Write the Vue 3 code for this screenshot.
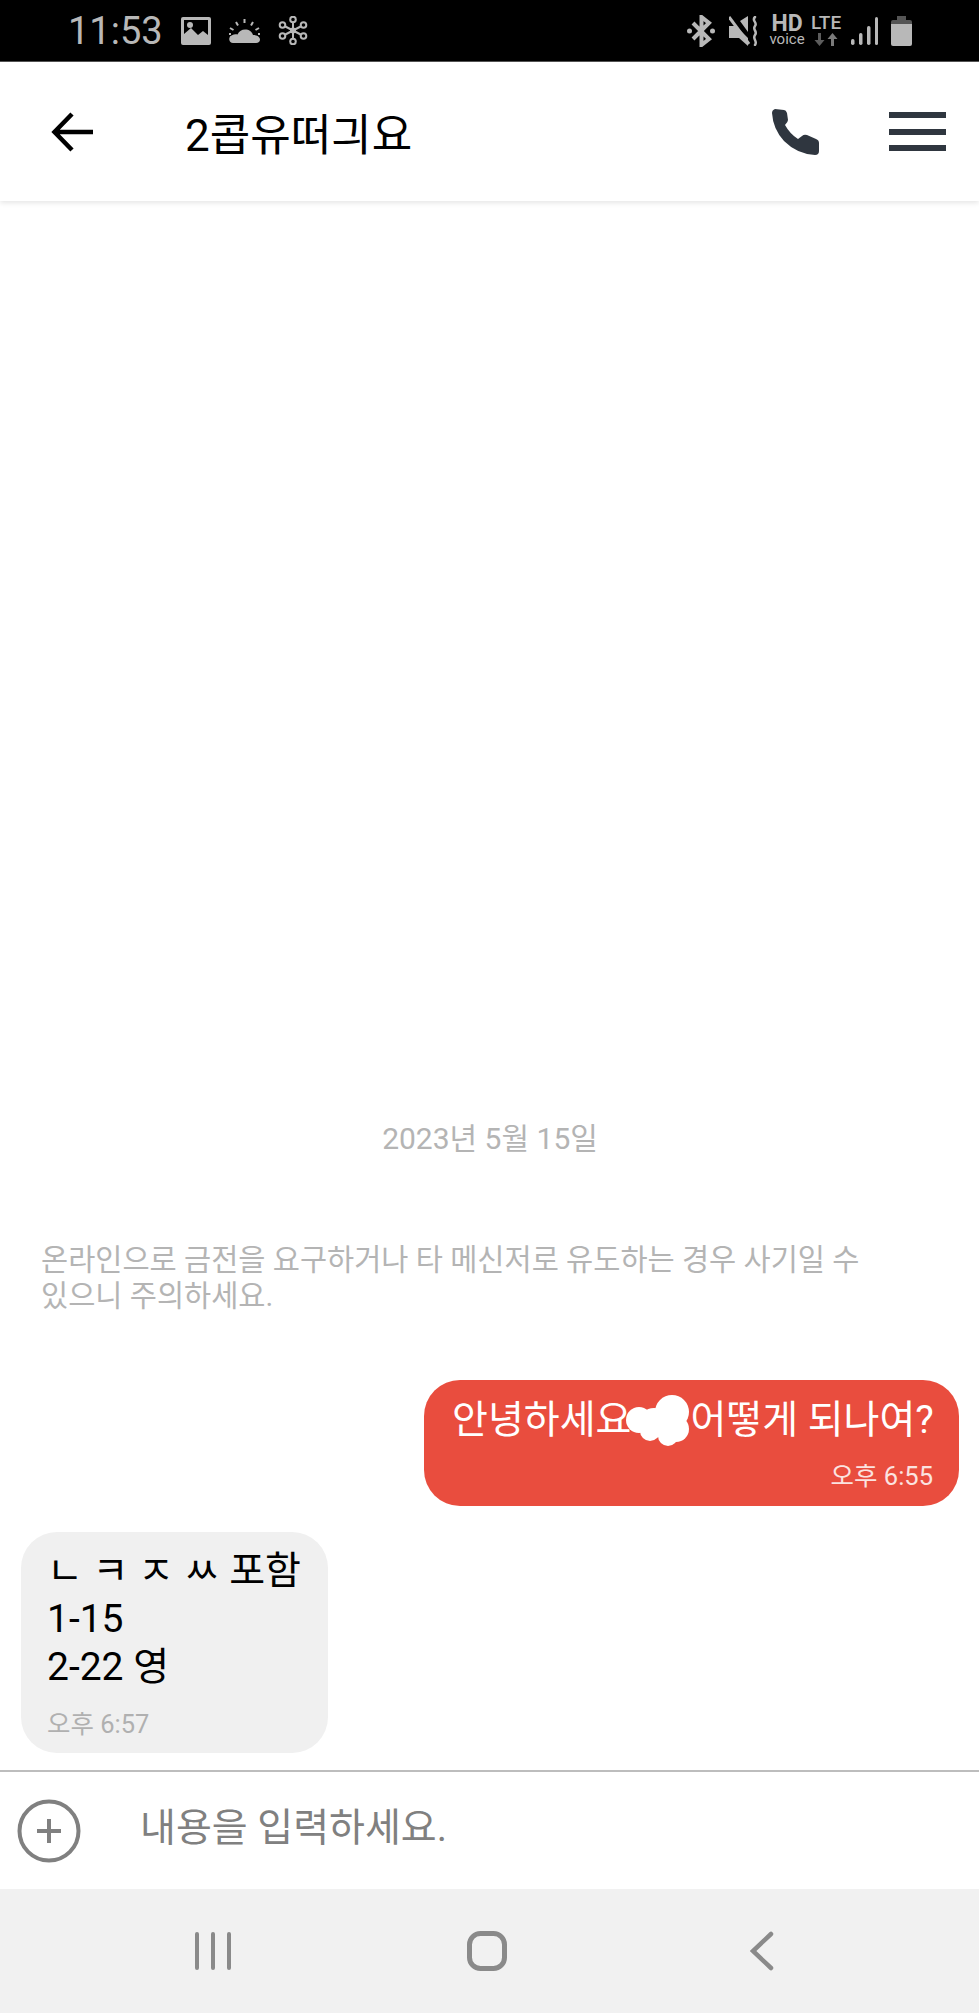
<script setup>
const warning = "온라인으로 금전을 요구하거나 타 메신저로 유도하는 경우 사기일 수 있으니 주의하세요.";
const petals = [
  [15, 3.5], [25.5, 9], [25.5, 20], [15, 25.5], [4.5, 20], [4.5, 9],
];
const blobParts = [
  [13, 25, 13], [28, 28, 15], [46, 17, 17], [50, 34, 13], [42, 41, 10], [24, 36, 10],
];
</script>

<template>
  <div class="phone">
    <div class="status">
      <div class="status-left">
        <span class="clock">11:53</span>
        <svg class="ic-image" width="30" height="28" viewBox="0 0 30 28">
          <path fill-rule="evenodd" fill="#b8b8b8" d="M2 0h26a2 2 0 0 1 2 2v24a2 2 0 0 1-2 2H2a2 2 0 0 1-2-2V2a2 2 0 0 1 2-2zM3 3v14l7-6 7 7 5-4 5 4V3z" />
          <circle cx="9" cy="8" r="3" fill="#b8b8b8" />
        </svg>
        <svg class="ic-weather" width="31" height="24" viewBox="0 0 31 24">
          <path fill="#b8b8b8" d="M4 24a4 4 0 0 1-1-7.8C5 15 7 15 8.500 15.500 10 12 13 10.500 16 10.500c4 0 7 2 8 5.500 3 0 7 1.500 7 4.500 0 2-1.500 3.500-4 3.500z" />
          <path stroke="#b8b8b8" stroke-width="2" fill="none" d="M15.500 0v4M7 3l2 3.500M24 3l-2 3.500M1 9l3.500 2M30 9l-3.500 2M0 15h2M29 15h2" />
        </svg>
        <svg class="ic-flower" width="30" height="29" viewBox="0 0 30 29">
          <path stroke="#b8b8b8" stroke-width="2" d="M15 3.500v22M4.500 9l21 11M25.500 9l-21 11" />
          <circle cx="15" cy="14.500" r="3" fill="#b8b8b8" />
          <circle v-for="(p, i) in petals" :key="i" :cx="p[0]" :cy="p[1]" r="2.800" fill="#000" stroke="#b8b8b8" stroke-width="2" />
        </svg>
      </div>
      <div class="status-right">
        <svg width="28" height="32" viewBox="0 0 28 32">
          <path fill="none" stroke="#b8b8b8" stroke-width="4" d="M6 8l16 16-7.500 6V2L22 8 6 24" />
          <circle cx="2.500" cy="16" r="2.500" fill="#b8b8b8" />
          <circle cx="25.500" cy="16" r="2.500" fill="#b8b8b8" />
        </svg>
        <svg class="ic-mute" width="31" height="30" viewBox="0 0 31 30">
          <path fill="#b8b8b8" d="M0 10h5l2 0L19 22v8l-9-8H0zM11 5l8-5v16z" />
          <path stroke="#b8b8b8" stroke-width="3" d="M0 1l20 27" />
          <path fill="none" stroke="#b8b8b8" stroke-width="2.500" stroke-linecap="round" d="M26 1c-4 4 3 5 0 9s3 5 0 9 3 6 0 10" />
        </svg>
        <div class="hd">
          <span class="hd-big">HD</span>
          <span class="hd-small">voice</span>
        </div>
        <div class="lte">
          <span class="lte-text">LTE</span>
          <svg width="24" height="13" viewBox="0 0 24 13">
            <path fill="#5c5c5c" d="M4 0h3v7h3.500L5.500 13 .5 7H4z" />
            <path fill="#7a7a7a" d="M17 13h3V6h3.500L18.500 0l-5 6H17z" />
          </svg>
        </div>
        <svg class="ic-signal" width="27" height="28" viewBox="0 0 27 28">
          <rect x="0" y="22" width="3.500" height="6" rx="1.700" fill="#b8b8b8" />
          <rect x="8" y="16" width="3.500" height="12" rx="1.700" fill="#b8b8b8" />
          <rect x="16" y="9" width="3.500" height="19" rx="1.700" fill="#b8b8b8" />
          <rect x="24" y="0" width="3" height="28" rx="1.500" fill="#b8b8b8" />
        </svg>
        <svg class="ic-battery" width="21" height="30" viewBox="0 0 21 30">
          <path fill="#555" d="M6 0h9v4h4a2 2 0 0 1 2 2v5H0V6a2 2 0 0 1 2-2h4z" />
          <path fill="#b8b8b8" d="M0 8h21v20a2 2 0 0 1-2 2H2a2 2 0 0 1-2-2z" />
        </svg>
      </div>
    </div>

    <header class="top">
      <svg class="back" width="42" height="40" viewBox="0 0 42 40">
        <path fill="none" stroke="#000" stroke-width="4.500" d="M42 20H4M21 2L3.500 20 21 38" />
      </svg>
      <h1 class="title">2콥유떠긔요</h1>
      <svg class="phone-ic" width="47" height="46" viewBox="0 0 47 46">
        <path fill="#2f363f" d="M3 0L12 1Q14 1 15 4L16 11Q16 13 13 16Q18 25 26 30L30 27Q32 25 35 26L44 30Q47 31 47 34L47 42Q47 46 43 46Q25 45 12 32Q1 20 0 4Q0 1 3 0Z" />
      </svg>
      <div class="menu">
        <span></span><span></span><span></span>
      </div>
    </header>

    <main class="chat">
      <div class="date">2023년 5월 15일</div>
      <p class="warning">{{ warning }}</p>
      <div class="row row-me">
        <div class="bubble bubble-me">
          <div class="msg">안녕하세요<span class="hidden-part"><svg class="blob" width="64" height="52" viewBox="0 0 64 52"><circle v-for="(b, i) in blobParts" :key="i" :cx="b[0]" :cy="b[1]" :r="b[2]" fill="#fff" /></svg></span>어떻게 되나여?</div>
          <div class="time time-me">오후 6:55</div>
        </div>
      </div>
      <div class="row">
        <div class="bubble bubble-other">
          <div class="msg-lines">
            <div>ㄴ ㅋ ㅈ ㅆ 포함</div>
            <div>1-15</div>
            <div>2-22 영</div>
          </div>
          <div class="time time-other">오후 6:57</div>
        </div>
      </div>
    </main>

    <div class="input-bar">
      <svg width="64" height="64" viewBox="0 0 64 64">
        <circle cx="32" cy="32" r="29.500" fill="none" stroke="#808080" stroke-width="4" />
        <path stroke="#808080" stroke-width="4" d="M20 32h24M32 20v24" />
      </svg>
      <span class="placeholder">내용을 입력하세요.</span>
    </div>

    <nav class="nav">
      <svg width="36" height="40" viewBox="0 0 36 40">
        <path stroke="#8a8a8a" stroke-width="4" stroke-linecap="round" fill="none" d="M2 3v34M18 3v34M34 3v34" />
      </svg>
      <svg width="40" height="40" viewBox="0 0 40 40">
        <rect x="2.500" y="2.500" width="35" height="35" rx="11" fill="none" stroke="#8a8a8a" stroke-width="5" />
      </svg>
      <svg class="nav-back" width="24" height="40" viewBox="0 0 24 40">
        <path stroke="#8a8a8a" stroke-width="4.500" stroke-linecap="round" fill="none" d="M21 3L3 20l18 17" />
      </svg>
    </nav>
  </div>
</template>

<style scoped>
.phone {
  width: 979px;
  height: 2013px;
  display: flex;
  flex-direction: column;
  background: #fff;
  font-family: Roboto, "Noto Sans CJK KR", sans-serif;
  overflow: hidden;
}
.status {
  height: 62px;
  flex: none;
  box-sizing: border-box;
  background: #000;
  border-bottom: 1px solid #555;
  display: flex;
  align-items: center;
  justify-content: space-between;
  padding: 0 67px 0 68px;
}
.status-left,
.status-right {
  display: flex;
  align-items: center;
}
.status-left {
  gap: 18px;
}
.ic-mute {
  margin-left: 14px;
}
.hd {
  margin-left: 11px;
}
.lte {
  margin-left: 8px;
}
.ic-signal {
  margin-left: 10px;
}
.ic-battery {
  margin-left: 13px;
}
.clock {
  font-size: 38px;
  color: #b8b8b8;
  line-height: 40px;
}
.hd {
  width: 32px;
  display: flex;
  flex-direction: column;
  align-items: center;
  color: #b8b8b8;
  font-weight: 700;
}
.hd-big {
  font-size: 23px;
  line-height: 18px;
}
.hd-small {
  font-size: 15px;
  line-height: 13px;
  font-weight: 400;
}
.lte {
  width: 30px;
  display: flex;
  flex-direction: column;
  align-items: center;
  gap: 3px;
  color: #b8b8b8;
}
.lte-text {
  font-size: 19px;
  line-height: 15px;
  font-weight: 500;
}
.top {
  height: 139px;
  flex: none;
  box-sizing: border-box;
  display: flex;
  align-items: center;
  padding: 0 33px 0 51px;
  box-shadow: 0 2px 5px rgba(0, 0, 0, 0.1);
  position: relative;
}
.title {
  flex: 1;
  margin: 0 0 0 92px;
  font-size: 44px;
  font-weight: 400;
  color: #000;
}
.menu {
  width: 57px;
  margin-left: 70px;
  display: flex;
  flex-direction: column;
  gap: 10.5px;
}
.menu span {
  height: 6px;
  background: #2f363f;
}
.chat {
  flex: 1;
  display: flex;
  flex-direction: column;
  justify-content: flex-end;
  padding: 0 20px 17px 21px;
}
.date {
  text-align: center;
  font-size: 30px;
  line-height: 36px;
  color: #b4b4b4;
  margin-bottom: 85px;
}
.warning {
  margin: 0 84px 66px 20px;
  font-size: 29.5px;
  line-height: 36px;
  color: #b4b4b4;
}
.row {
  display: flex;
}
.row-me {
  justify-content: flex-end;
  margin-bottom: 26px;
}
.bubble {
  box-sizing: border-box;
  border-radius: 36px;
}
.bubble-me {
  background: #e94d3e;
  color: #fff;
  width: 535px;
  height: 126px;
  padding: 14px 26px 0 28px;
}
.msg {
  font-size: 39px;
  line-height: 52px;
  white-space: nowrap;
  display: flex;
}
.hidden-part {
  width: 59px;
  height: 52px;
  flex: none;
  position: relative;
}
.blob {
  position: absolute;
  left: -5px;
  top: 1px;
}
.time {
  font-size: 25.5px;
  line-height: 30px;
}
.time-me {
  text-align: right;
  margin-top: 15px;
  color: #fbe3e0;
}
.bubble-other {
  background: #f0f0f0;
  width: 307px;
  height: 221px;
  padding: 15px 20px 0 26px;
  color: #000;
}
.msg-lines {
  font-size: 39px;
  line-height: 48px;
  white-space: nowrap;
}
.time-other {
  margin-top: 18px;
  color: #b0b0b0;
}
.input-bar {
  height: 119px;
  flex: none;
  box-sizing: border-box;
  border-top: 2px solid #bdbdbd;
  display: flex;
  align-items: center;
  gap: 59px;
  padding-left: 17px;
}
.placeholder {
  font-size: 39px;
  line-height: 44px;
  margin-top: -6px;
  color: #808080;
}
.nav {
  height: 124px;
  flex: none;
  background: #f1f1f1;
  display: flex;
  align-items: center;
  padding-left: 195px;
  gap: 236px;
}
.nav-back {
  margin-left: 7px;
}
</style>

<style>
html,
body {
  margin: 0;
  background: #fff;
}
</style>
